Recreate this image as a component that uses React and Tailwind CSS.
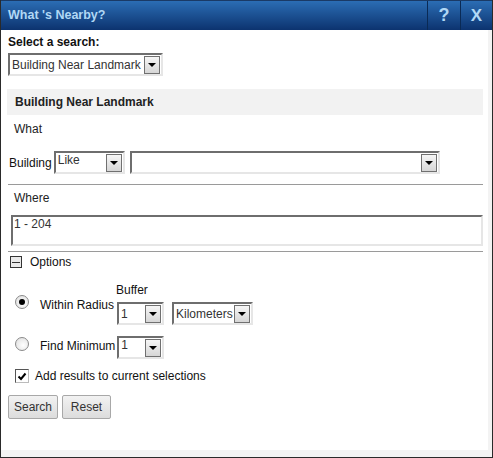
import React from 'react'

const FONT = "font-['Liberation_Sans',Arial,sans-serif]"

function Arrow() {
  return (
    <div className="w-[16px] h-[18px] border border-[#707070] bg-[linear-gradient(#f6f6f6,#d6d6d6)] flex items-center justify-center shrink-0">
      <div className="w-0 h-0 border-l-[4px] border-r-[4px] border-t-[4px] border-l-transparent border-r-transparent border-t-black" />
    </div>
  )
}

function Select({ width, text, top = false }) {
  return (
    <div
      className={`h-[23px] border-2 border-t-[#6e6e6e] border-l-[#6e6e6e] border-b-[#e6e6e6] border-r-[#e6e6e6] bg-white flex justify-between pr-[1px] ${top ? 'items-start' : 'items-center'}`}
      style={{ width }}
    >
      <span className="text-[12px] text-[#333] pl-[2px] leading-[14px] whitespace-nowrap">{text}</span>
      <div className={top ? 'self-center' : ''}><Arrow /></div>
    </div>
  )
}

function Radio({ checked }) {
  return (
    <div className="w-[14px] h-[14px] rounded-full border border-[#8a8a8a] bg-[radial-gradient(circle_at_60%_60%,#ffffff,#dcdcdc)] flex items-center justify-center shrink-0">
      {checked && <div className="w-[6px] h-[6px] rounded-full bg-black" />}
    </div>
  )
}

export default function App() {
  return (
    <div className={`${FONT} w-[493px] h-[458px] flex flex-col border-x border-b border-[#2a2a2a]`}>
      <div className="h-[30px] shrink-0 flex bg-[linear-gradient(#2b6db4,#0c336f)] border-t border-[#1a3a66]">
        <div className="flex-1 pl-[7px] flex items-center text-[12.5px] font-bold text-[#b0d8f5]">What 's Nearby?</div>
        <div className="w-[33px] border-l border-[#0a2a55] flex items-center justify-center text-[18px] font-bold text-[#b0d8f5]">?</div>
        <div className="w-[32px] border-l border-[#0a2a55] flex items-center justify-center text-[17px] font-bold text-[#b0d8f5]">X</div>
      </div>
      <div className="flex-1 bg-[#f3f3f3] flex">
        <div className="flex-1 bg-white mr-[4px] mb-[7px] pl-[7px] pr-[5px] text-[12px] text-[#111]">
          <div className="mt-[5px] font-bold leading-[14px]">Select a search:</div>
          <div className="mt-[4px]"><Select width={155} text="Building Near Landmark" /></div>
          <div className="mt-[13px] -ml-[1px] h-[26px] bg-[#f2f2f2] flex items-center pl-[8px] font-bold text-[#222]">Building Near Landmark</div>
          <div className="mt-[7px] pl-[6px] leading-[14px] text-[#222]">What</div>
          <div className="mt-[15px] flex items-center">
            <span className="pl-[1px] text-[#111]">Building</span>
            <div className="ml-[2px]"><Select width={71} text="Like" top /></div>
            <div className="ml-[5px]"><Select width={310} text="" /></div>
          </div>
          <div className="mt-[10px] border-t border-[#9a9a9a]" />
          <div className="mt-[6px] pl-[6px] leading-[14px] text-[#222]">Where</div>
          <div className="mt-[10px] ml-[3px] h-[31px] border-2 border-t-[#6e6e6e] border-l-[#6e6e6e] border-b-[#e6e6e6] border-r-[#e6e6e6] text-[#333] leading-[14px] pl-[1px]">1 - 204</div>
          <div className="mt-[5px] border-t border-[#9a9a9a]" />
          <div className="mt-[1px] flex items-center">
            <div className="ml-[2px] w-[12px] h-[12px] border border-[#333] bg-[#eaeaea] flex items-center justify-center">
              <div className="w-[8px] h-px bg-[#333]" />
            </div>
            <span className="ml-[8px] text-[#111]">Options</span>
          </div>
          <div className="mt-[12px] ml-[108px] leading-[14px] text-[#111]">Buffer</div>
          <div className="mt-[5px] flex items-start">
            <div className="ml-[7px] mt-[-7px]"><Radio checked /></div>
            <span className="ml-[11px] leading-[14px] -mt-[4px] text-[#111]">Within Radius</span>
            <div className="ml-[3px]"><Select width={47} text="1" /></div>
            <div className="ml-[8px]"><Select width={81} text="Kilometers" /></div>
          </div>
          <div className="mt-[11px] flex items-start">
            <div className="ml-[7px] mt-[1px]"><Radio /></div>
            <span className="ml-[11px] mt-[3px] leading-[14px] text-[#111]">Find Minimum</span>
            <div className="ml-[2px]"><Select width={47} text="1" top /></div>
          </div>
          <div className="mt-[8px] flex items-center">
            <div className="ml-[7px] w-[14px] h-[14px] border border-t-[#555] border-l-[#555] border-b-[#bbb] border-r-[#bbb] bg-white flex items-center justify-center">
              <svg width="10" height="9" viewBox="0 0 10 9"><path d="M1.5 4.5 L4 7 L8.5 1.5" stroke="#000" strokeWidth="2" fill="none" /></svg>
            </div>
            <span className="ml-[6px] text-[#111]">Add results to current selections</span>
          </div>
          <div className="mt-[10px] flex gap-[4px]">
            <button className="w-[50px] h-[24px] border border-[#a8a8a8] rounded-[2px] bg-[linear-gradient(#f2f2f2,#dcdcdc)] text-[12px] text-[#333]">Search</button>
            <button className="w-[49px] h-[24px] border border-[#a8a8a8] rounded-[2px] bg-[linear-gradient(#f2f2f2,#dcdcdc)] text-[12px] text-[#333]">Reset</button>
          </div>
        </div>
      </div>
    </div>
  )
}
